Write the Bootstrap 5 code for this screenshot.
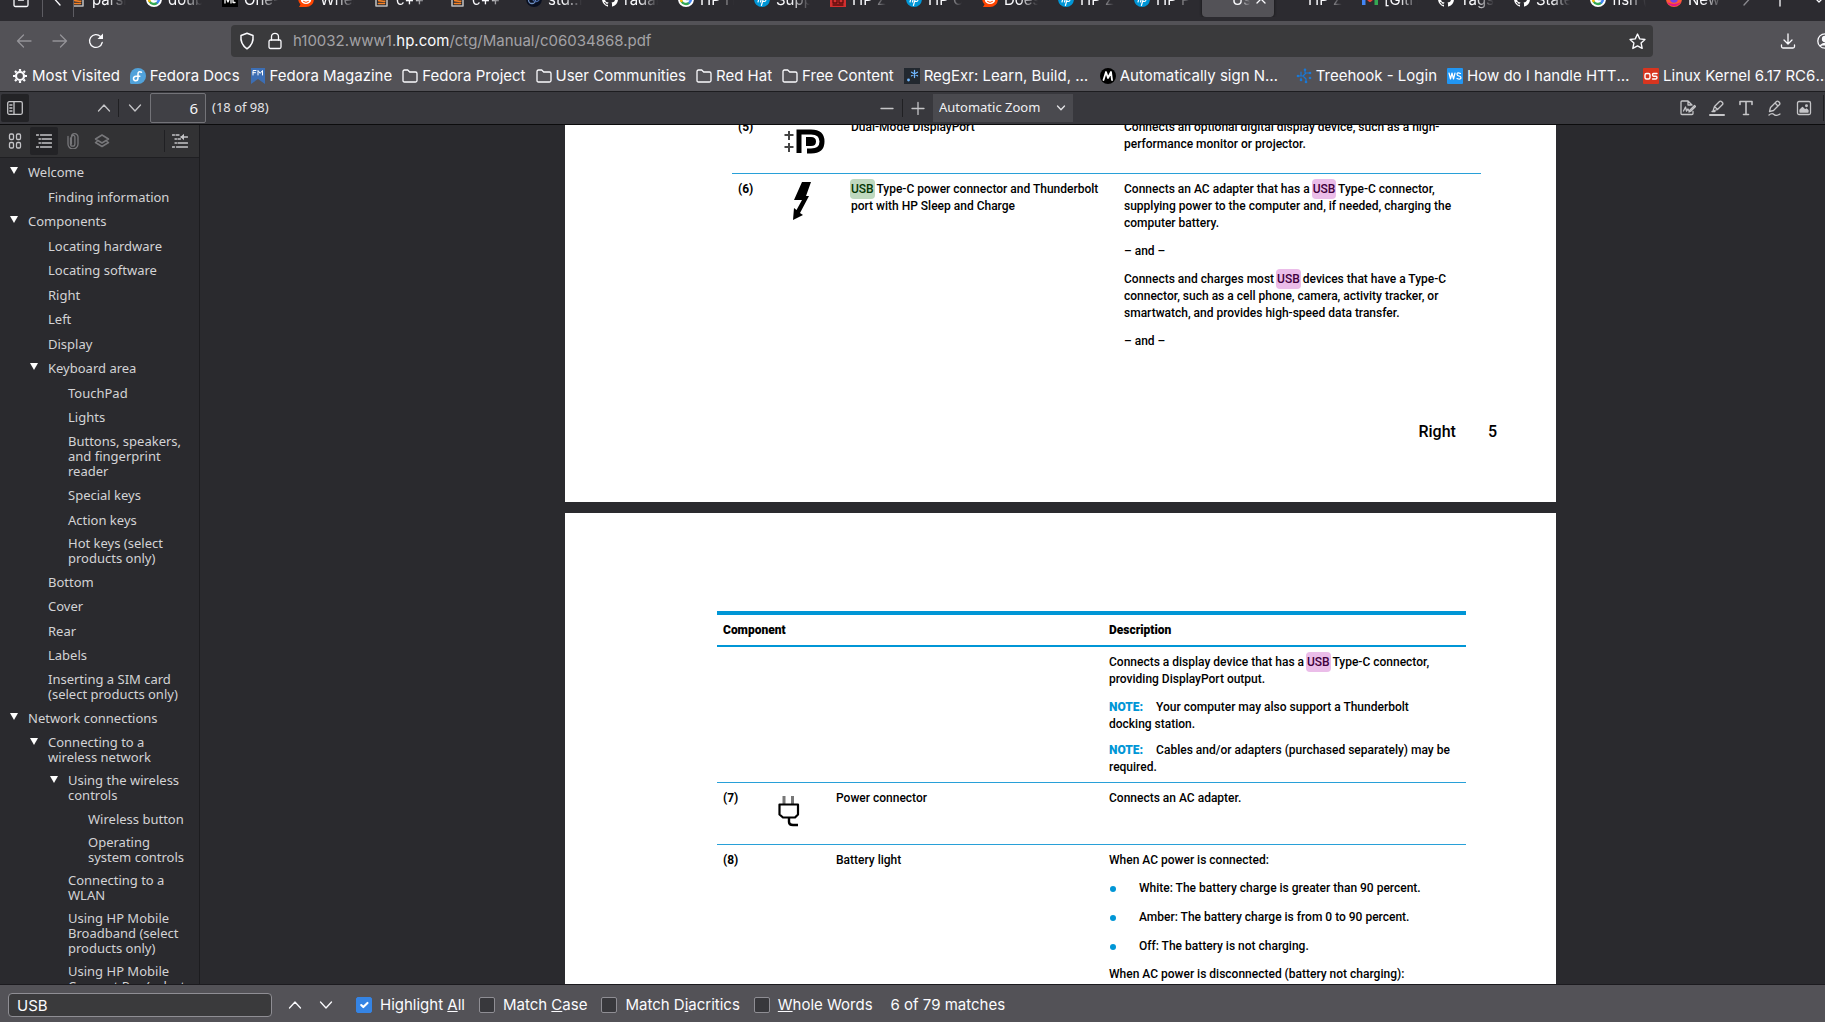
<!DOCTYPE html>
<html lang="en">
<head>
<meta charset="utf-8">
<meta name="viewport" content="width=device-width, initial-scale=1">
<title>c06034868.pdf</title>
<link href="https://cdn.jsdelivr.net/npm/bootstrap@5.3.0/dist/css/bootstrap.min.css" rel="stylesheet">
<style>
html,body{height:100%}
body{font-family:Inter,"Liberation Sans",sans-serif;font-size:15px;color:#fbfbfe;background:#2a2a2e;overflow:hidden}
a{color:inherit;text-decoration:none}
svg{display:block;flex:none;fill:none;stroke:currentColor;stroke-width:1.3;stroke-linecap:round;stroke-linejoin:round}
.flatbtn{background:none;border:0;padding:0;color:inherit;display:flex;align-items:center;justify-content:center;flex:none}
/* tab strip, partly above the top edge */
.tabstrip{height:21px;background:#2c2b30;overflow:hidden}
.tabline{height:36px;margin-top:-19px}
.tabclip .tabrow{margin-left:-14px}
.tabitem{width:76px;height:36px;padding:0 10px;gap:6px;flex:none}
.tabitem .ttl{white-space:nowrap;overflow:hidden;width:34px;padding-top:2px;-webkit-mask-image:linear-gradient(90deg,#000 45%,transparent);mask-image:linear-gradient(90deg,#000 45%,transparent)}
.tabitem.current{width:72px;margin:0 2px;padding:0 8px;background:#535257;border-radius:4px;box-shadow:0 0 3px #111}
.tabitem.current .ttl{width:22px}
.vsep{width:1px;background:#5d5c62;flex:none}
.fav{width:16px;height:16px;flex:none}
/* navigation */
.navline{height:36px;background:#535257;padding:4px 0 0 6px}
.navline .flatbtn{width:36px;height:32px}
.urlbar{height:32px;background:#3a3a3c;border-radius:4px;margin-left:117px;padding-left:8px}
.urlbar .flatbtn{width:28px}
.urlbar .addr{color:#a3a2a6;padding-left:4px}
.urlbar .addr b{font-weight:400;color:#fbfbfe}
.nav-end{width:172px}
.bookmarks{height:34px;background:#535257;padding:4px 0 0 12px;gap:10px;overflow:hidden;white-space:nowrap}
.bookmarks a{display:flex;align-items:center;gap:4px;max-width:186px;flex:none}
.bookmarks span{overflow:hidden;text-overflow:ellipsis}
/* viewer */
.pdfbar{height:34px;background:#38383d;border-top:1px solid #1d1d20;border-bottom:1px solid #0c0c0d;font-family:"Noto Sans",sans-serif;font-size:13px;color:#e3e3e6;overflow:hidden}
.pdfbar .start{flex:0 0 48%;padding-left:1px}
.pdfbar .flatbtn{width:28px;height:28px;color:#c5c5c8}
.flatbtn.on{background:#232326;border-radius:2px}
.pdfbar .mid .flatbtn{width:22px}
.tsep{width:1px;height:18px;background:#202023;flex:none}
.pagenum{width:56px;height:30px;background:#404045;border:1px solid #737378;border-radius:2px;color:#f5f5f7;text-align:right;padding:0 7px;font-size:15px}
.zoomsel{width:140px;height:28px;border:0;border-radius:0;background:#4a4a4f;color:#f0f0f3;font-size:13px;padding:0 6px;appearance:none}
.zoomwrap{margin-left:4px}
.zoomwrap svg{right:6px;top:8px;pointer-events:none}
.tools{gap:1px;padding-right:1px}
.sidebar{width:200px;border-right:1px solid #1c1c1f;background:#2a2a2e;font-family:"Noto Sans",sans-serif;font-size:13px;line-height:15px;color:#d3d3d5;flex:none}
.sidetools{height:33px;background:#323234;border-bottom:1px solid #1f1f22;padding:0 1px;gap:1px;color:#c5c5c8}
.sidetools .flatbtn{width:28px;height:28px}
.sidetools .dim{color:#77777a}
.outline{padding:4px 9px 0 8px}
.outline ul{list-style:none;margin:0;padding:0 0 0 20px}
.outline>ul{padding:0}
.outline li>div{display:flex;min-height:24px;padding:2px 0 6px 20px;align-items:center;position:relative}
.outline li:nth-child(even)>div,.outline li>.branch{min-height:25px}
.branch::before{content:"";position:absolute;left:2px;top:5px;border:4px solid transparent;border-top:7px solid #fff;border-bottom:0}
.viewer{background:#2a2a2e;padding-left:96px;overflow:hidden}
.sheet{width:991px;background:#fff;color:#000;font:500 12px/17px Roboto,"Liberation Sans",sans-serif;margin:0 auto 11px;flex:none}
.sheet.first{margin-top:-13px;padding:0 75px 60px 167px}
.sheet.second{padding:98px 90px 60px 152px}
.sheet table{width:749px;table-layout:fixed;border-collapse:separate;border-spacing:0}
.sheet td,.sheet th{padding:7px 12px 6px 7px;vertical-align:top}
.sheet td:first-child,.sheet th:first-child{padding-left:6px}
.sheet .num,.sheet .pic{padding-right:0}
.sheet p{margin:0 0 11px}
.sheet p:last-child{margin:0}
.sheet .num{font-weight:700}
.rule td{border-top:1px solid #28a0d8}
.sheet .tblhead th{border-top:4px solid #0096d6;border-bottom:2px solid #0096d6;font-weight:900}
.hit{background:#ebbde9;color:#40003c;border-radius:4px;padding:3px 1px;margin:0 -1px}
.hit.now{background:#bfd9bf;color:#063806}
.note{color:#0096d6;font-weight:900;margin-right:13px}
.sheet p.tight{margin-bottom:9px}
.dots{list-style:none;margin:0 0 11px;padding:0 0 0 1px}
.dots li{display:flex;align-items:center;gap:23px}
.dots li+li{margin-top:12px}
.dots li::before{content:"";width:6px;height:6px;border-radius:50%;background:#0096d6}
.foot{font-size:16px;padding:66px 0 0;margin-right:-16px;gap:32px;line-height:20px}
/* find bar */
.findbar{height:38px;background:#535257;border-top:1px solid #1c1b1f;padding:3px 0 0 8px}
.findbar .query{width:264px;height:24px;background:#3a3a3c;border:1px solid #8f8e94;border-radius:4px;color:#fbfbfe;padding:0 8px;font-size:15px}
.findbar .flatbtn{width:31px;height:28px}
.findbar .steps{margin:0 15px 0 7px}
.findbar .tick{width:16px;height:16px;margin:0;border-radius:2px;border:1px solid #8f8e94;background-color:#38383c;float:none}
.findbar .tick:checked{background-color:#3584e4;border-color:#3584e4}
.findbar label{white-space:nowrap}
.findbar .opt{gap:8px;margin-right:14px}
</style>
<script src="https://cdn.jsdelivr.net/npm/bootstrap@5.3.0/dist/js/bootstrap.bundle.min.js"></script>
</head>
<body class="d-flex flex-column">
<svg width="0" height="0" class="position-absolute" aria-hidden="true">
<defs>
<symbol id="so" viewBox="0 0 16 16"><path d="M2 9v6h11V9" stroke="#bbb" stroke-width="1.6"/><path d="M4.5 12.5h6M4.7 9.6l6 .9M5.5 6.400l5.500 2.200" stroke="#f48024" stroke-width="1.6"/></symbol>
<symbol id="gg" viewBox="0 0 16 16"><circle cx="8" cy="8" r="8" fill="#fff" stroke="none"/><path d="M3.600 10.500A5 5 0 0 0 11 12" stroke="#34a853" stroke-width="2.400"/><path d="M3.500 5.500a5 5 0 0 0 0 4.500" stroke="#fbbc05" stroke-width="2.400"/><path d="M11.500 11.500A5 5 0 0 0 13 8H8.500" stroke="#4285f4" stroke-width="2.400"/><path d="M4 5a5 5 0 0 1 7.500-.7" stroke="#ea4335" stroke-width="2.400"/></symbol>
<symbol id="md" viewBox="0 0 16 16"><path d="M0 0h16v16H0z" fill="#000" stroke="none"/><path d="M3 12V4l3 7 3-7v8M11 5v6.500h2" stroke="#fff"/></symbol>
<symbol id="rd" viewBox="0 0 16 16"><path d="M8 0a8 8 0 0 1 0 16H1l1.500-2.500A8 8 0 0 1 8 0z" fill="#ff4500" stroke="none"/><ellipse cx="8" cy="9" rx="5.200" ry="4" fill="#fff" stroke="none"/><path d="M5.500 10.500q2.500 2 5 0" stroke="#ff4500" stroke-width="1"/><circle cx="6" cy="8" r="1" fill="#ff4500" stroke="none"/><circle cx="10" cy="8" r="1" fill="#ff4500" stroke="none"/></symbol>
<symbol id="gh" viewBox="0 0 16 16"><path fill="#fff" stroke="none" d="M8 0C3.580 0 0 3.580 0 8c0 3.540 2.290 6.530 5.470 7.590.4.070.55-.17.55-.38v-1.490c-2.010.37-2.530-.49-2.690-.94-.09-.23-.48-.94-.82-1.130-.28-.15-.68-.52-.01-.53.63-.01 1.080.58 1.230.82.720 1.210 1.870.87 2.330.66.070-.52.280-.87.510-1.070-1.780-.2-3.640-.89-3.640-3.950 0-.87.310-1.590.82-2.150-.08-.2-.36-1.020.08-2.120 0 0 .67-.21 2.200.82a7.600 7.600 0 0 1 4 0c1.530-1.040 2.200-.82 2.200-.82.440 1.100.160 1.920.080 2.120.510.560.820 1.270.820 2.150 0 3.070-1.870 3.750-3.650 3.950.290.250.540.730.540 1.480v2.200c0 .21.150.460.550.380A8 8 0 0 0 16 8c0-4.420-3.580-8-8-8z"/></symbol>
<symbol id="hp" viewBox="0 0 16 16"><circle cx="8" cy="8" r="8" fill="#0096d6" stroke="none"/><path d="M6.500 2L4 11M5.200 6.500q3-1.500 2.500 0L6.500 11M10 5.500L7.400 14.500M10 5.500h1.500q1.500 0 1 1.500l-.8 2.500q-.4 1-1.500 1H9" stroke="#fff" stroke-width="1.200"/></symbol>
<symbol id="rb" viewBox="0 0 16 16"><path d="M0 0h16v16H0z" fill="#d32f2f" stroke="none"/><path d="M3 8h4v4H3zM9 8h4v4H9zM3 14h10" stroke="#5a0d0d"/></symbol>
<symbol id="cp" viewBox="0 0 16 16"><circle cx="8" cy="8" r="8" fill="#0a1020" stroke="none"/><circle cx="6" cy="9" r="3.500" stroke="#6f8fc0"/><circle cx="10" cy="7" r="3.500" stroke="#4766a0"/></symbol>
<symbol id="gm" viewBox="0 0 16 16"><path d="M0 3h3.500v11H0z" fill="#4285f4" stroke="none"/><path d="M12.500 3H16v11h-3.500z" fill="#34a853" stroke="none"/><path d="M1 3.500l7 6 7-6" stroke="#ea4335" stroke-width="3"/></symbol>
<symbol id="ff" viewBox="0 0 16 16"><circle cx="8" cy="8" r="8" fill="#ff5a36" stroke="none"/><path d="M1 11a8 8 0 0 0 14 0Q8 15 1 11z" fill="#e31587" stroke="none"/><circle cx="8" cy="8" r="3.800" fill="#7542e5" stroke="none"/></symbol>
<symbol id="folder" viewBox="0 0 16 16"><path d="M1 3.500Q1 2 2.500 2h3.200l2 2h5.800Q15 4 15 5.500v7q0 1.500-1.500 1.500h-11Q1 14 1 12.500z"/></symbol>
<symbol id="up" viewBox="0 0 16 16"><path d="M2.500 11L8 5l5.500 6"/></symbol>
<symbol id="dn" viewBox="0 0 16 16"><path d="M2.500 5L8 11l5.500-6"/></symbol>
</defs></svg>

<header class="flex-shrink-0">
<div class="tabstrip">
 <div class="tabline d-flex">
  <button class="flatbtn" style="width:42px" aria-label="Firefox View"><svg width="18" height="18" viewBox="0 0 18 18" stroke-width="1.600"><path d="M2 2h14v13q0 1.500-1.500 1.500h-11Q2 16.500 2 15zM6.500 10h5"/></svg></button>
  <div class="vsep"></div>
  <button class="flatbtn" style="width:30px" aria-label="Scroll tabs left"><svg width="16" height="16"><path d="M10 3L5 8.500l5 5.500"/></svg></button>
  <div class="vsep"></div>
  <div class="tabclip overflow-hidden flex-shrink-0">
   <nav class="tabrow d-flex" id="tabs">
    <a href="#" class="tabitem d-flex align-items-center"><svg class="fav"><use href="#so"/></svg><span class="ttl">parsing</span></a>
    <a href="#" class="tabitem d-flex align-items-center"><svg class="fav"><use href="#gg"/></svg><span class="ttl">double</span></a>
    <a href="#" class="tabitem d-flex align-items-center"><svg class="fav"><use href="#md"/></svg><span class="ttl">One-</span></a>
    <a href="#" class="tabitem d-flex align-items-center"><svg class="fav"><use href="#rd"/></svg><span class="ttl">When</span></a>
    <a href="#" class="tabitem d-flex align-items-center"><svg class="fav"><use href="#so"/></svg><span class="ttl">c++</span></a>
    <a href="#" class="tabitem d-flex align-items-center"><svg class="fav"><use href="#so"/></svg><span class="ttl">c++</span></a>
    <a href="#" class="tabitem d-flex align-items-center"><svg class="fav"><use href="#cp"/></svg><span class="ttl">std::fr</span></a>
    <a href="#" class="tabitem d-flex align-items-center"><svg class="fav"><use href="#gh"/></svg><span class="ttl">radare</span></a>
    <a href="#" class="tabitem d-flex align-items-center"><svg class="fav"><use href="#gg"/></svg><span class="ttl">HP H</span></a>
    <a href="#" class="tabitem d-flex align-items-center"><svg class="fav"><use href="#hp"/></svg><span class="ttl">Suppo</span></a>
    <a href="#" class="tabitem d-flex align-items-center"><svg class="fav"><use href="#rb"/></svg><span class="ttl">HP Z</span></a>
    <a href="#" class="tabitem d-flex align-items-center"><svg class="fav"><use href="#hp"/></svg><span class="ttl">HP C</span></a>
    <a href="#" class="tabitem d-flex align-items-center"><svg class="fav"><use href="#rd"/></svg><span class="ttl">Does</span></a>
    <a href="#" class="tabitem d-flex align-items-center"><svg class="fav"><use href="#hp"/></svg><span class="ttl">HP Z</span></a>
    <a href="#" class="tabitem d-flex align-items-center"><svg class="fav"><use href="#hp"/></svg><span class="ttl">HP P</span></a>
    <a href="#" class="tabitem current d-flex align-items-center"><span class="fav"></span><span class="ttl">Use</span><svg width="10" height="10" stroke-width="1.600"><path d="M1 1l8 8M9 1L1 9"/></svg></a>
    <a href="#" class="tabitem d-flex align-items-center"><span class="fav"></span><span class="ttl">HP Z</span></a>
    <a href="#" class="tabitem d-flex align-items-center"><svg class="fav"><use href="#gm"/></svg><span class="ttl">[GitH</span></a>
    <a href="#" class="tabitem d-flex align-items-center"><svg class="fav"><use href="#gh"/></svg><span class="ttl">Tags</span></a>
    <a href="#" class="tabitem d-flex align-items-center"><svg class="fav"><use href="#gh"/></svg><span class="ttl">State</span></a>
    <a href="#" class="tabitem d-flex align-items-center"><svg class="fav"><use href="#gg"/></svg><span class="ttl">fish (</span></a>
    <a href="#" class="tabitem d-flex align-items-center"><svg class="fav"><use href="#ff"/></svg><span class="ttl">New T</span></a>
   </nav>
  </div>
  <button class="flatbtn" style="width:28px;color:#8c8b90" aria-label="Scroll tabs right"><svg width="16" height="16"><path d="M6 3l5 5.500L6 14"/></svg></button>
  <button class="flatbtn" style="width:40px" aria-label="New tab"><svg width="16" height="16"><path d="M8 1v14M1 8h14"/></svg></button>
  <button class="flatbtn ms-auto" style="width:14px" aria-label="List tabs"><svg width="14" height="14"><path d="M2 4l6 6 6-6"/></svg></button>
 </div>
</div>
<div class="navline d-flex">
 <button class="flatbtn" aria-label="Back" style="color:#949398"><svg width="16" height="16"><path d="M15 8H1.500M7.500 2l-6 6 6 6"/></svg></button>
 <button class="flatbtn" aria-label="Forward" style="color:#949398"><svg width="16" height="16"><path d="M1 8h13.500M8.500 2l6 6-6 6"/></svg></button>
 <button class="flatbtn" aria-label="Reload"><svg width="16" height="16" stroke-width="1.700"><path d="M14.200 9.500A6.400 6.400 0 1 1 12.500 3.500"/><path d="M9.500 6H15V.5z" fill="currentColor" stroke="none"/></svg></button>
 <div class="urlbar d-flex align-items-center flex-grow-1">
  <button class="flatbtn" style="width:16px" aria-label="Tracking protection"><svg width="16" height="18" viewBox="0 0 16 18"><path d="M8 1.200L14 3.500Q15 12 8 16.800 1 12 2 3.500z" stroke-width="1.500"/></svg></button>
  <button class="flatbtn" style="margin-left:6px" aria-label="Connection secure"><svg width="14" height="18" viewBox="0 0 14 18" stroke-width="1.500"><rect x="1" y="8" width="12" height="8.500" rx="1.500"/><path d="M3.500 8V4.800a3.500 3.500 0 0 1 7 0V8"/></svg></button>
  <span class="addr">h10032.www1.<b>hp.com</b>/ctg/Manual/c06034868.pdf</span>
  <button class="flatbtn ms-auto" style="width:32px" aria-label="Bookmark this page"><svg width="17" height="17" viewBox="0 0 16 16"><path d="M8 1l2.100 4.500 4.900.6-3.600 3.400 1 5L8 12.100 3.600 14.500l1-5L1 6.100l4.900-.6z"/></svg></button>
 </div>
 <div class="nav-end d-flex justify-content-end overflow-hidden flex-shrink-0">
  <button class="flatbtn" aria-label="Downloads" style="width:38px"><svg width="16" height="16" stroke-width="1.500"><path d="M8 1v9.500M4 7l4 4 4-4M1.500 12v1.500q0 1.500 1.500 1.500h10q1.500 0 1.500-1.500V12"/></svg></button>
  <button class="flatbtn justify-content-start" aria-label="Account" style="width:18px;padding-left:10px"><svg width="16" height="16" stroke-width="1.500"><circle cx="8" cy="8" r="7.200"/><circle cx="8" cy="6" r="2.500" fill="currentColor"/><path d="M3.500 12.500q4.500-4 9 0" fill="currentColor"/></svg></button>
 </div>
</div>
<nav class="bookmarks d-flex align-items-center">
 <a href="#"><svg width="16" height="16"><circle cx="8" cy="8" r="4" stroke-width="2.200"/><path d="M8 1v2M8 13v2M1 8h2M13 8h2M3 3l1.500 1.500M11.500 11.500L13 13M13 3l-1.500 1.500M4.500 11.500L3 13" stroke-width="2.200" stroke-linecap="butt"/></svg><span>Most Visited</span></a>
 <a href="#"><svg width="16" height="16"><path d="M8 0a8 8 0 0 1 0 16H1.500Q0 16 0 14.500V8a8 8 0 0 1 8-8z" fill="#51a2da" stroke="none"/><path d="M11.500 4.200Q8 2.800 8 6v4q0 2.800-2.500 2.800Q3.500 12.600 3.500 10.600T6 8.300h3.800" stroke="#fff" stroke-width="1.500"/></svg><span>Fedora Docs</span></a>
 <a href="#"><svg width="16" height="16"><path d="M1 0h14v16l-7-5-7 5z" fill="#3c6eb4" stroke="none"/><path d="M3 7V2.500h3M3 4.700h2.500M8 7V2.500l2.200 2.800 2.300-2.800V7" stroke="#fff" stroke-width="1"/></svg><span>Fedora Magazine</span></a>
 <a href="#"><svg width="16" height="16"><use href="#folder"/></svg><span>Fedora Project</span></a>
 <a href="#"><svg width="16" height="16"><use href="#folder"/></svg><span>User Communities</span></a>
 <a href="#"><svg width="16" height="16"><use href="#folder"/></svg><span>Red Hat</span></a>
 <a href="#"><svg width="16" height="16"><use href="#folder"/></svg><span>Free Content</span></a>
 <a href="#"><svg width="16" height="16"><path d="M0 0h16v16H0z" fill="#22282f" stroke="none"/><circle cx="4.500" cy="12" r="1.400" fill="#70b8ff" stroke="none"/><path d="M10.500 2.500v7M7.500 4.200l6 3.600M13.500 4.200l-6 3.600" stroke="#70b8ff"/></svg><span>RegExr: Learn, Build, &amp; Test</span></a>
 <a href="#"><svg width="16" height="16"><circle cx="8" cy="8" r="8" fill="#000" stroke="none"/><path d="M3.500 12L6 4l2 6 3-6 1 8" stroke="#fff" stroke-width="1.800"/></svg><span>Automatically sign NVIDIA</span></a>
 <a href="#"><svg width="16" height="16"><path d="M2 8h5l3-3h4M7 8l3 3M9 1.500v3M5 4v4M5 11v-1M10 11v3" stroke="#1878d8" stroke-width="1.200"/><g fill="#1878d8" stroke="none"><circle cx="2" cy="8" r="1.300"/><circle cx="14" cy="5" r="1.300"/><circle cx="9" cy="1.800" r="1.300"/><circle cx="10" cy="14" r="1.300"/><circle cx="5" cy="12" r="1.300"/><circle cx="14" cy="10" r="1.300"/></g></svg><span>Treehook - Login</span></a>
 <a href="#"><svg width="16" height="16"><rect width="16" height="16" rx="1" fill="#2196f3" stroke="none"/><path d="M2 5l1.500 6L5 5l1.500 6L8 5M13.500 5.500Q10 4 10 6.300q0 1.300 2 1.700t2 1.700q0 2.200-4 .8" stroke="#fff" stroke-width="1.200"/></svg><span>How do I handle HTTP requests</span></a>
 <a href="#"><svg width="16" height="16"><rect width="16" height="16" rx="1" fill="#d8351f" stroke="none"/><rect x="2" y="5.500" width="5" height="5.500" rx="1.500" stroke="#fff" stroke-width="1.400"/><path d="M14 5.500h-3.500q-1 0-1 1.300t1 1.400H13q1 0 1 1.400t-1 1.400H9.500" stroke="#fff" stroke-width="1.400"/></svg><span>Linux Kernel 6.17 RC6 Released</span></a>
</nav>
</header>

<div class="pdfbar d-flex align-items-center flex-shrink-0">
 <div class="start d-flex align-items-center">
  <button class="flatbtn on" aria-label="Toggle sidebar"><svg width="16" height="16"><rect x=".7" y="1.700" width="14.600" height="12.600" rx="1.500"/><path d="M7 2v12M2.800 5h2.200M2.800 8h2.200M2.800 11h2.200"/></svg></button>
  <button class="flatbtn" style="margin-left:61px" aria-label="Previous page"><svg width="16" height="16"><use href="#up"/></svg></button>
  <div class="tsep"></div>
  <button class="flatbtn" style="margin:0 1px 0 2px" aria-label="Next page"><svg width="16" height="16"><use href="#dn"/></svg></button>
  <input class="pagenum" type="text" value="6" aria-label="Page">
  <span style="margin-left:6px">(18 of 98)</span>
 </div>
 <div class="mid d-flex align-items-center">
  <button class="flatbtn" aria-label="Zoom out"><svg width="14" height="14"><path d="M1 7.500h12"/></svg></button>
  <div class="px-1"><div class="tsep"></div></div>
  <button class="flatbtn" aria-label="Zoom in"><svg width="14" height="14"><path d="M1 7.500h12M7 1.500v12"/></svg></button>
  <div class="zoomwrap position-relative"><select class="zoomsel" aria-label="Zoom"><option>Automatic Zoom</option></select><svg class="position-absolute" width="12" height="12"><path d="M2.500 4L6 7.800 9.500 4"/></svg></div>
 </div>
 <div class="tools d-flex align-items-center ms-auto">
  <button class="flatbtn" aria-label="Signature"><svg width="16" height="16"><path d="M13 11.500v2q0 1-1 1H2q-1 0-1-1V2q0-1 1-1h6l4 4M8 1v4h3M3.500 11l2-4 1 4 1.500-2 1 2M9.500 10.500l5-5 1 1-5 5-1.500.5z"/></svg></button>
  <button class="flatbtn" aria-label="Highlight"><svg width="16" height="16"><path d="M4 11l1.500-4.500 5-5q1-1 2.500.5t.5 2.500l-5 5zM5.500 6.500l3 3M3 11.500h3"/><path d="M1 15h14" stroke-width="2"/></svg></button>
  <button class="flatbtn" aria-label="Text"><svg width="16" height="16"><path d="M2 4.500V1.500h12v3M8 1.500v13M5.500 14.500h5" stroke-width="1.600"/></svg></button>
  <button class="flatbtn" aria-label="Draw"><svg width="16" height="16"><path d="M2.500 11.500l1-4 6-6q1-1 2.500.5t.5 2.500l-6 6zM8 3l3 3M2 15q3-2.500 5-.5t6-.5"/></svg></button>
  <button class="flatbtn" aria-label="Image"><svg width="16" height="16"><rect x="1.500" y="1.500" width="13" height="13" rx="1.500"/><path d="M4 12V10l2.500-2.500L9 10l1.500-1 1.500 1.500V12z" fill="currentColor"/><circle cx="10.500" cy="5.800" r=".8" fill="currentColor"/></svg></button>
  <div class="tsep ms-1" style="height:26px"></div>
 </div>
</div>

<main class="d-flex flex-grow-1 overflow-hidden">
<aside class="sidebar overflow-hidden">
 <div class="sidetools d-flex align-items-center">
  <button class="flatbtn" aria-label="Thumbnails"><svg width="16" height="16" stroke-width="1.500"><rect x="2.500" y="1" width="4" height="5.500" rx="1.300"/><rect x="9.500" y="1" width="4" height="5.500" rx="1.300"/><rect x="2.500" y="9.500" width="4" height="5.500" rx="1.300"/><rect x="9.500" y="9.500" width="4" height="5.500" rx="1.300"/></svg></button>
  <button class="flatbtn on" aria-label="Outline"><svg width="16" height="16" stroke-linecap="butt" stroke-width="1.500"><path d="M.5 2h2M4.500 2h11M3 6h1.500M6 6h9.500M3 10h1.500M6 10h9.500M.5 14h2M4.500 14h11"/></svg></button>
  <button class="flatbtn dim" aria-label="Attachments"><svg width="16" height="16"><path d="M5.500 5v6a2.200 2.200 0 0 0 4.400 0V4a1.600 1.600 0 0 0-3.200 0M3 3.500V11a5 5 0 0 0 10 0V4a3.300 3.300 0 0 0-6.600 0v7"/></svg></button>
  <button class="flatbtn dim" aria-label="Layers"><svg width="16" height="16"><path d="M8 2l6.500 4L8 10 1.500 6zM3 8.500L1.500 9.500 8 13.500l6.500-4L13 8.500" stroke-width="1.500"/></svg></button>
  <div class="tsep ms-auto" style="height:22px"></div>
  <button class="flatbtn me-1" aria-label="Current outline item"><svg width="16" height="16" stroke-linecap="butt" stroke-width="1.500"><path d="M.5 2h2M4 2h3M3 6h1.500M6 6h2.500M3 10h1.500M6 10h9.500M.5 14h2M4.500 14h11M9 4h6.500"/><path d="M12 .8L8.500 4 12 7.200z" fill="currentColor" stroke="none"/></svg></button>
 </div>
 <nav class="outline">
 <ul>
  <li><div class="branch"><a href="#">Welcome</a></div><ul><li><div><a href="#">Finding information</a></div></li></ul></li>
  <li><div class="branch"><a href="#">Components</a></div>
   <ul>
    <li><div><a href="#">Locating hardware</a></div></li>
    <li><div><a href="#">Locating software</a></div></li>
    <li><div><a href="#">Right</a></div></li>
    <li><div><a href="#">Left</a></div></li>
    <li><div><a href="#">Display</a></div></li>
    <li><div class="branch"><a href="#">Keyboard area</a></div>
     <ul>
      <li><div><a href="#">TouchPad</a></div></li>
      <li><div><a href="#">Lights</a></div></li>
      <li><div><a href="#">Buttons, speakers, and fingerprint reader</a></div></li>
      <li><div><a href="#">Special keys</a></div></li>
      <li><div><a href="#">Action keys</a></div></li>
      <li><div><a href="#">Hot keys (select products only)</a></div></li>
     </ul></li>
    <li><div><a href="#">Bottom</a></div></li>
    <li><div><a href="#">Cover</a></div></li>
    <li><div><a href="#">Rear</a></div></li>
    <li><div><a href="#">Labels</a></div></li>
    <li><div><a href="#">Inserting a SIM card (select products only)</a></div></li>
   </ul></li>
  <li><div class="branch"><a href="#">Network connections</a></div>
   <ul>
    <li><div class="branch"><a href="#">Connecting to a wireless network</a></div>
     <ul>
      <li><div class="branch"><a href="#">Using the wireless controls</a></div>
       <ul>
        <li><div><a href="#">Wireless button</a></div></li>
        <li><div><a href="#">Operating system controls</a></div></li>
       </ul></li>
      <li><div><a href="#">Connecting to a WLAN</a></div></li>
      <li><div><a href="#">Using HP Mobile Broadband (select products only)</a></div></li>
      <li><div><a href="#">Using HP Mobile Connect Pro (select products only)</a></div></li>
     </ul></li>
   </ul></li>
 </ul>
 </nav>
</aside>
<section class="viewer flex-grow-1">
 <article class="sheet first">
  <table>
   <colgroup><col style="width:45px"><col style="width:67px"><col style="width:273px"><col></colgroup>
   <tr style="height:61px">
    <td class="num">(5)</td>
    <td class="pic"><svg width="42" height="28" viewBox="0 0 42 28" style="margin-top:9px"><path d="M5 3v9M0.500 7h9M5 15v9M0.500 19h9" stroke="#444" stroke-width="2" stroke-linecap="butt"/><path d="M15 25V4h12q11 0 11 9.500T27 23h-4" stroke="#000" stroke-width="5" stroke-linecap="butt" stroke-linejoin="miter"/><path d="M22 9h5q5 0 5 4.500T27 18h-5z" fill="#000" stroke="none"/></svg></td>
    <td>Dual-Mode DisplayPort</td>
    <td>Connects an optional digital display device, such as a high-performance monitor or projector.</td>
   </tr>
   <tr class="rule">
    <td class="num">(6)</td>
    <td class="pic ps-3"><svg width="20" height="40" viewBox="0 0 20 40"><path d="M9 1h9l-5 14h3L7 32l3 2L0 39l1-12 2.500 2L9 19H1z" fill="#000" stroke="none"/></svg></td>
    <td><span class="hit now">USB</span> Type-C power connector and Thunderbolt port with HP Sleep and Charge</td>
    <td><p>Connects an AC adapter that has a <span class="hit">USB</span> Type-C connector, supplying power to the computer and, if needed, charging the computer battery.</p><p>– and –</p><p>Connects and charges most <span class="hit">USB</span> devices that have a Type-C connector, such as a cell phone, camera, activity tracker, or smartwatch, and provides high-speed data transfer.</p><p>– and –</p></td>
   </tr>
  </table>
  <div class="foot d-flex justify-content-end"><span>Right</span><span>5</span></div>
 </article>
 <article class="sheet second">
  <table>
   <colgroup><col style="width:45px"><col style="width:67px"><col style="width:273px"><col></colgroup>
   <tr class="tblhead"><th colspan="3">Component</th><th>Description</th></tr>
   <tr>
    <td></td><td></td><td></td>
    <td><p>Connects a display device that has a <span class="hit">USB</span> Type-C connector, providing DisplayPort output.</p><p class="tight"><span class="note">NOTE:</span>Your computer may also support a Thunderbolt docking station.</p><p><span class="note">NOTE:</span>Cables and/or adapters (purchased separately) may be required.</p></td>
   </tr>
   <tr class="rule" style="height:62px">
    <td class="num">(7)</td>
    <td class="pic ps-3"><svg width="24" height="32" viewBox="0 0 24 32" style="margin-top:5px"><path d="M6 1v8M14.500 1v8" stroke="#777" stroke-width="3" stroke-linecap="butt"/><path d="M1.500 9.500H20v10l-3 3H5l-3.500-3z" stroke="#000" stroke-width="2.200"/><path d="M11 23v4q0 3 4 3h5" stroke="#000" stroke-width="2.400" stroke-linecap="butt"/></svg></td>
    <td>Power connector</td><td>Connects an AC adapter.</td>
   </tr>
   <tr class="rule">
    <td class="num">(8)</td><td></td><td>Battery light</td>
    <td><p>When AC power is connected:</p>
     <ul class="dots"><li>White: The battery charge is greater than 90 percent.</li><li>Amber: The battery charge is from 0 to 90 percent.</li><li>Off: The battery is not charging.</li></ul>
     <p>When AC power is disconnected (battery not charging):</p></td>
   </tr>
  </table>
 </article>
</section>
</main>

<form class="findbar d-flex align-items-center flex-shrink-0 mb-0">
 <input class="query" type="text" value="USB" aria-label="Find in page">
 <div class="steps d-flex">
 <button type="button" class="flatbtn" aria-label="Previous match"><svg width="16" height="16"><use href="#up"/></svg></button>
 <button type="button" class="flatbtn" aria-label="Next match"><svg width="16" height="16"><use href="#dn"/></svg></button>
 </div>
 <div class="opt d-flex align-items-center"><input class="form-check-input tick" type="checkbox" id="o1" checked><label for="o1">Highlight <u>A</u>ll</label></div>
 <div class="opt d-flex align-items-center"><input class="form-check-input tick" type="checkbox" id="o2"><label for="o2">Match <u>C</u>ase</label></div>
 <div class="opt d-flex align-items-center"><input class="form-check-input tick" type="checkbox" id="o3"><label for="o3">Match D<u>i</u>acritics</label></div>
 <div class="opt d-flex align-items-center"><input class="form-check-input tick" type="checkbox" id="o4"><label for="o4"><u>W</u>hole Words</label></div>
 <span class="ms-1">6 of 79 matches</span>
</form>
</body>
</html>
